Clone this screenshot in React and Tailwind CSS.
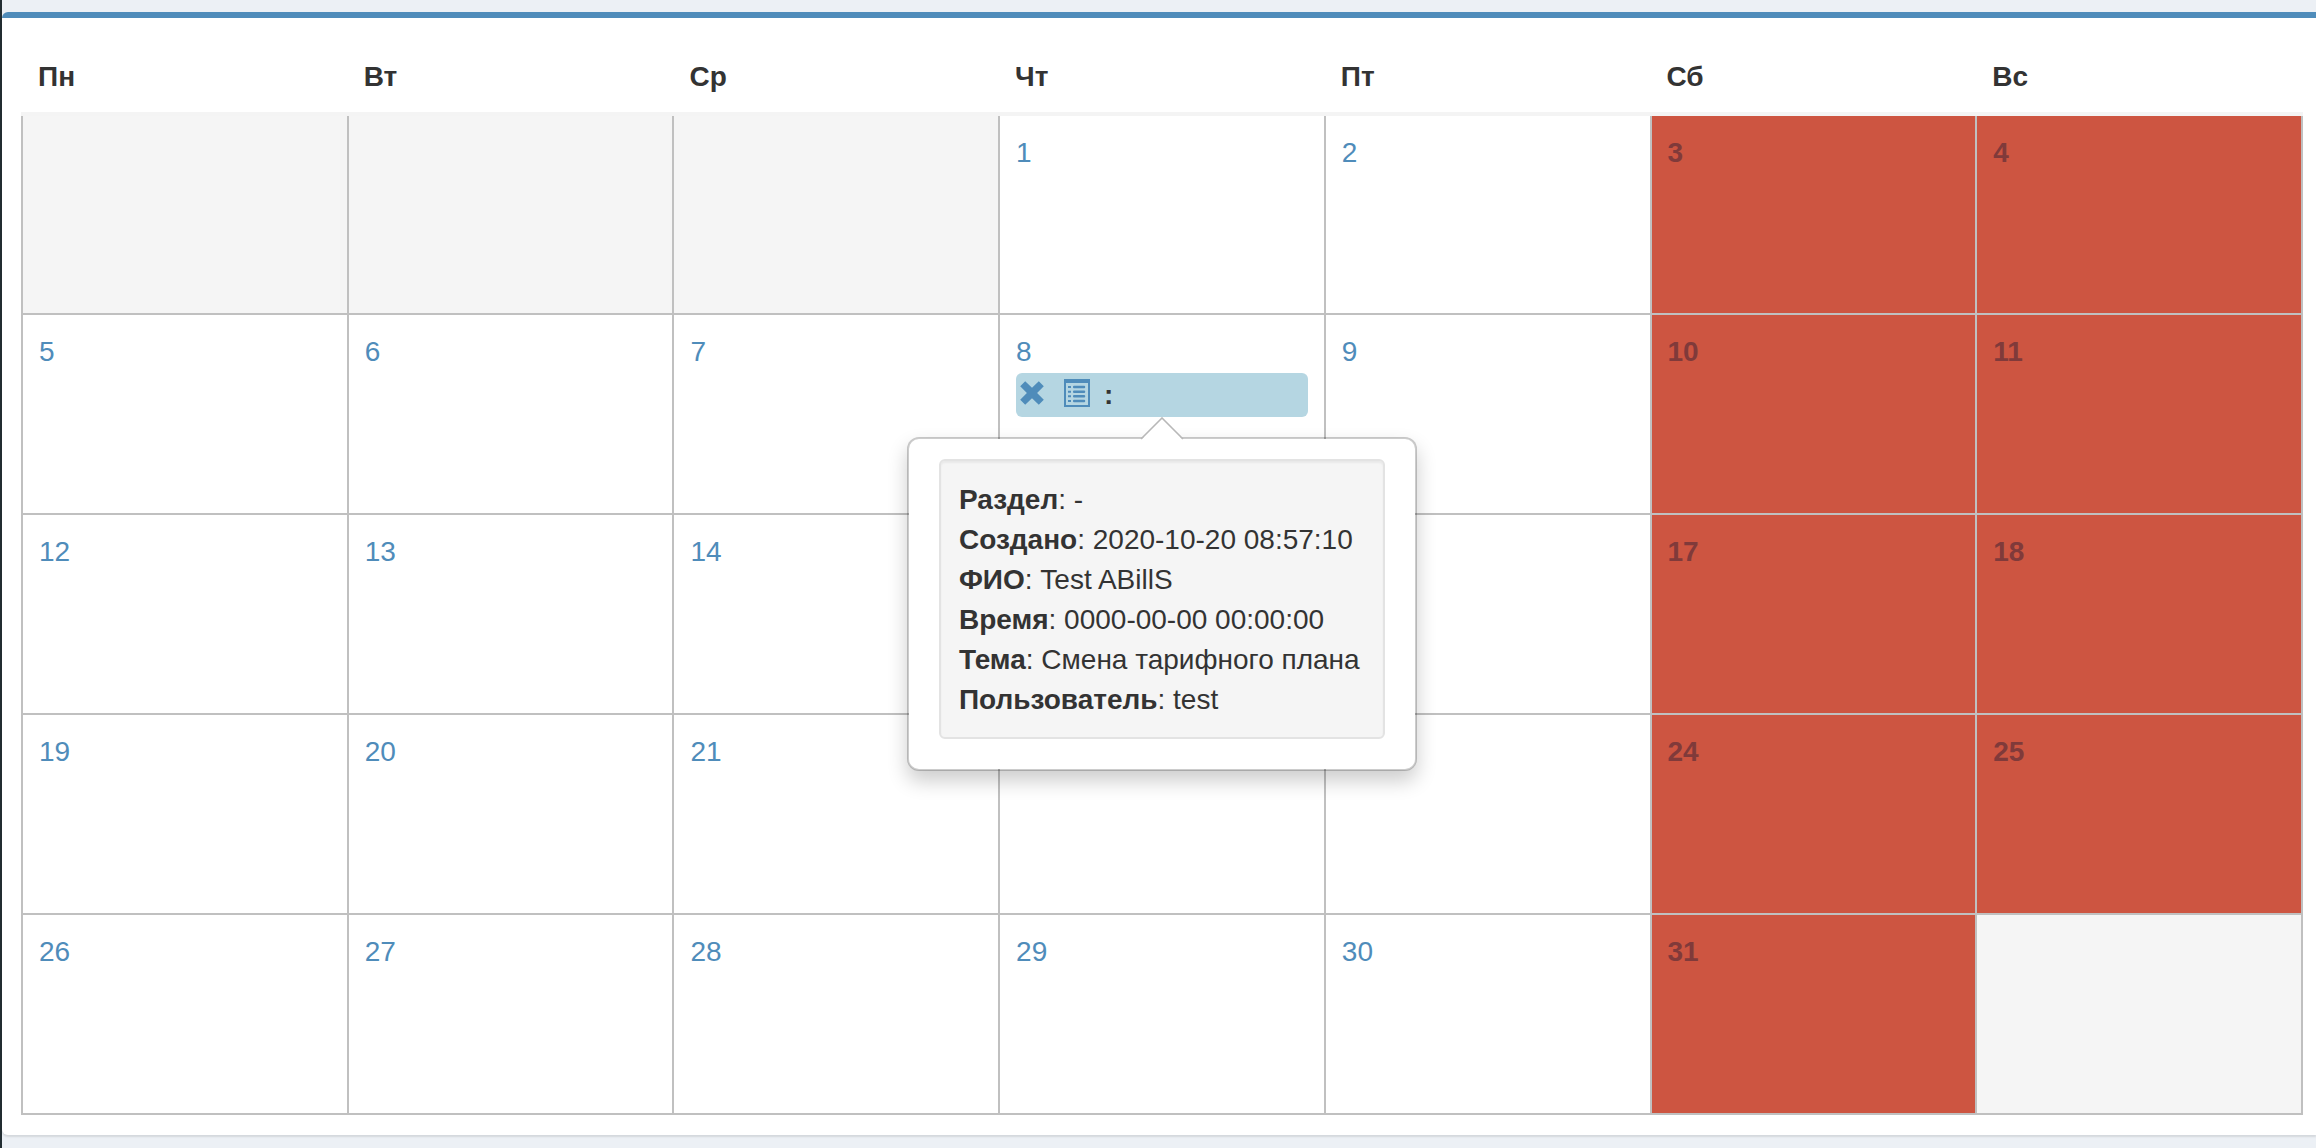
import React, { useState } from 'react';

const weekDays = ['Пн', 'Вт', 'Ср', 'Чт', 'Пт', 'Сб', 'Вс'];

const weeks = [
  [null, null, null, 1, 2, 3, 4],
  [5, 6, 7, 8, 9, 10, 11],
  [12, 13, 14, 15, 16, 17, 18],
  [19, 20, 21, 22, 23, 24, 25],
  [26, 27, 28, 29, 30, 31, null],
];

const events = {
  8: {
    title: '',
    details: [
      ['Раздел', '-'],
      ['Создано', '2020-10-20 08:57:10'],
      ['ФИО', 'Test ABillS'],
      ['Время', '0000-00-00 00:00:00'],
      ['Тема', 'Смена тарифного плана'],
      ['Пользователь', 'test'],
    ],
  },
};

const RemoveIcon = () => (
  <svg viewBox="0 0 24 24" className="h-6 w-6" fill="currentColor" aria-hidden="true">
    <path d="M5.2 .2 12 6.8 18.8 .2 23.8 5.2 17.1 12 23.8 18.8 18.8 23.8 12 17.2 5.2 23.8 .2 18.8 6.9 12 .2 5.2z" />
  </svg>
);

const ListIcon = () => (
  <svg viewBox="0 0 26 28" className="h-7 w-[26px]" fill="currentColor" aria-hidden="true">
    <path fillRule="evenodd" d="M0 0h26v28H0zM2 4v22h22V4z" />
    <path d="M4 7h3v2H4zM4 11.7h3v2H4zM4 16.3h3v2H4zM4 21h3v2H4z" />
    <rect x="9" y="6.8" width="12.2" height="2.4" rx="1" />
    <rect x="9" y="11.5" width="12.2" height="2.4" rx="1" />
    <rect x="9" y="16.1" width="12.2" height="2.4" rx="1" />
    <rect x="9" y="20.8" width="12.2" height="2.4" rx="1" />
  </svg>
);

const EventPopover = ({ details }) => (
  <div
    role="tooltip"
    className="absolute top-full left-1/2 z-10 mt-5 -translate-x-1/2 rounded-xl border-2 border-black/20 bg-white bg-clip-padding px-[30px] pt-5 pb-[30px] text-[#333] shadow-[0_10px_20px_rgba(0,0,0,0.2)]"
  >
    <svg
      viewBox="0 0 44 24"
      className="absolute -top-[22px] left-1/2 h-6 w-11 -translate-x-1/2"
      aria-hidden="true"
    >
      <path d="M0 24 22 2 44 24z" fill="#fff" />
      <path d="M1 22 22 1 43 22" fill="none" stroke="#b8b8b8" strokeWidth="1.6" />
    </svg>
    <div className="min-w-[446px] rounded-md border-2 border-[#e3e3e3] bg-[#f5f5f5] px-[18px] pt-[19px] pb-[17px] whitespace-nowrap shadow-[inset_0_2px_2px_rgba(0,0,0,0.05)]">
      {details.map(([label, value]) => (
        <div key={label}>
          <b>{label}</b>: {value}
        </div>
      ))}
    </div>
  </div>
);

const CalendarEvent = ({ event, open, onToggle }) => (
  <div className="relative mt-px flex h-11 items-center rounded-md bg-[#b5d6e2] pl-1 text-[#4f8cba]">
    <button type="button" aria-label="Удалить" className="cursor-pointer pb-1">
      <RemoveIcon />
    </button>
    <button type="button" aria-label="Подробнее" onClick={onToggle} className="ml-5 cursor-pointer pb-1">
      <ListIcon />
    </button>
    <b className="ml-3.5 text-[#333]">: {event.title}</b>
    {open && <EventPopover details={event.details} />}
  </div>
);

const DayCell = ({ day, weekend, open, onToggle }) => {
  if (!day) return <td className="h-[200px] border-2 border-[#c0c0c0] bg-[#f5f5f5]" />;

  if (weekend) {
    return (
      <td className="h-[200px] border-2 border-[#c0c0c0] bg-[#cd5541] px-4 pt-[17px] align-top font-bold text-[#803a3a]">
        {day}
      </td>
    );
  }

  return (
    <td className="h-[200px] border-2 border-[#c0c0c0] px-4 pt-[17px] align-top">
      <a href={`#day-${day}`} className="block text-[#4f8cba]">{day}</a>
      {events[day] && <CalendarEvent event={events[day]} open={open} onToggle={onToggle} />}
    </td>
  );
};

const App = () => {
  const [openDay, setOpenDay] = useState(8);

  const toggleDay = (day) => setOpenDay(openDay === day ? null : day);

  return (
    <div className="min-h-screen border-l-2 border-[#222d32] bg-[#ecf0f5] pt-3 font-['Liberation_Sans',Arial,sans-serif] text-[28px] leading-10 text-[#333]">
      <div className="rounded-l-md border-t-6 border-[#4f8cba] bg-white pt-5 pr-[13px] pb-5 pl-[19px] shadow-[0_2px_2px_rgba(0,0,0,0.1)]">
        <table className="w-full table-fixed border-collapse">
          <thead>
            <tr>
              {weekDays.map((name) => (
                <th key={name} className="border-b-4 border-[#f4f4f4] px-4 pt-[19px] pb-[15px] text-left font-bold">
                  {name}
                </th>
              ))}
            </tr>
          </thead>
          <tbody>
            {weeks.map((week, i) => (
              <tr key={i}>
                {week.map((day, j) => (
                  <DayCell
                    key={j}
                    day={day}
                    weekend={j > 4}
                    open={openDay === day}
                    onToggle={() => toggleDay(day)}
                  />
                ))}
              </tr>
            ))}
          </tbody>
        </table>
      </div>
    </div>
  );
};

export default App;
